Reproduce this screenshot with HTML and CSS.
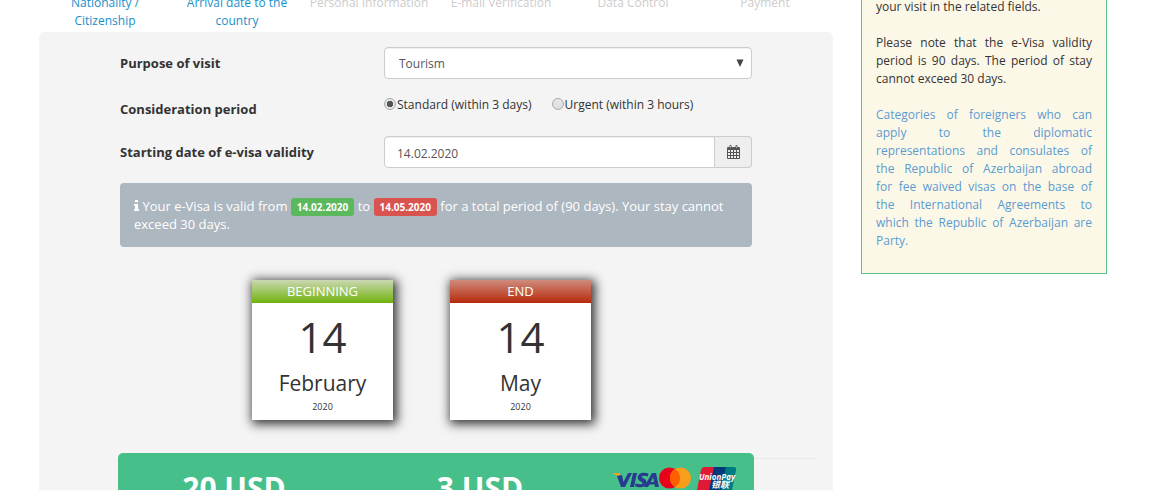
FILE: index.html
```html
<!DOCTYPE html>
<html lang="en">
<head>
<meta charset="utf-8">
<title>e-Visa application</title>
<link rel="stylesheet" href="styles.css">
</head>
<body>
<div class="page">
  <main>
    <ol class="steps">
      <li class="step done">Nationality / Citizenship</li>
      <li class="step done">Arrival date to the country</li>
      <li class="step">Personal Information</li>
      <li class="step">E-mail Verification</li>
      <li class="step">Data Control</li>
      <li class="step">Payment</li>
    </ol>
    <form class="panel">
      <div class="field">
        <label class="name" for="purpose">Purpose of visit</label>
        <div class="select-wrap">
          <select class="control" id="purpose"><option>Tourism</option></select>
          <svg class="arrow" viewBox="0 0 8 8" aria-hidden="true"><path d="M0.500 0.500h7L4 8z"/></svg>
        </div>
      </div>
      <div class="field period">
        <span class="name" id="period">Consideration period</span>
        <div class="radios" role="radiogroup" aria-labelledby="period">
          <label class="choice"><input class="radio" type="radio" name="period" checked>Standard (within 3 days)</label>
          <label class="choice"><input class="radio" type="radio" name="period">Urgent (within 3 hours)</label>
        </div>
      </div>
      <div class="field">
        <label class="name" for="start">Starting date of e-visa validity</label>
        <div class="group">
          <input class="control date" id="start" type="text" value="14.02.2020">
          <button class="pick" type="button" aria-label="Choose date">
            <svg class="calendar" viewBox="0 0 13 14" aria-hidden="true">
              <path fill="#555" d="M1 2h1.500V.8Q2.500 0 3.500 0t1 .8V2h4V.8q0-.8 1-.8t1 .8V2H12q1 0 1 1v10q0 1-1 1H1q-1 0-1-1V3q0-1 1-1z"/>
              <path fill="#eee" d="M1 5h2v2H1zM4 5h2v2H4zM7 5h2v2H7zM10 5h2v2h-2zM1 8h2v2H1zM4 8h2v2H4zM7 8h2v2H7zM10 8h2v2h-2zM1 11h2v2H1zM4 11h2v2H4zM7 11h2v2H7zM10 11h2v2h-2z"/>
              <path stroke="#ccc" stroke-width=".7" d="M3.500 1v2M9.500 1v2"/>
            </svg>
          </button>
        </div>
      </div>
      <p class="notice"><svg class="info" viewBox="0 0 5 11" aria-hidden="true"><path d="M1 0h3v2.300H1zM0 4h4v5h1v2H0V9h1V6H0z"/></svg> Your e-Visa is valid from <span class="tag from">14.02.2020</span> to <span class="tag until">14.05.2020</span> for a total period of (90 days). Your stay cannot exceed 30 days.</p>
      <div class="dates">
        <section class="day">
          <h2 class="day-title begin">BEGINNING</h2>
          <div class="number">14</div>
          <div class="month">February</div>
          <div class="year">2020</div>
        </section>
        <section class="day">
          <h2 class="day-title end">END</h2>
          <div class="number">14</div>
          <div class="month">May</div>
          <div class="year">2020</div>
        </section>
      </div>
      <div class="checkout">
        <hr class="rule">
        <div class="fees">
          <div class="fee">20 USD</div>
          <div class="fee">3 USD</div>
          <svg class="cards" viewBox="0 0 126 28" role="img" aria-label="Visa, Mastercard, UnionPay">
            <path fill="#f7a01b" d="M0 6h6q2 0 2.500 2L10 14Q6 8 0 6z"/>
            <g fill="#273b8f">
              <path d="M5 9l4 11h4l7-14h-4l-4.500 9L10 8z"/>
              <path d="M21 6h4l-3 14h-4z"/>
              <path d="M36.500 6.500l-.8 3q-5-1.700-6 0c-.5 1.500 5.500 2 4.800 6.500-.8 4.500-7.500 5-11.500 3.300l.8-3.100c3 1.500 6.500 1.300 6.800 0 .3-1.600-5.300-2-4.900-6.200.5-4.300 6.300-5.200 10.800-3.500z"/>
              <path fill-rule="evenodd" d="M40 6h4l3 14h-4l-.5-2.500h-5L36 20h-4zm1.200 4.200L38.700 15H42z"/>
            </g>
            <circle cx="57.500" cy="11" r="10.500" fill="#eb001b"/>
            <circle cx="68.500" cy="11" r="10.500" fill="#f79e1b"/>
            <path fill="#ff5f00" d="M63 2a10.500 10.500 0 0 1 0 18 10.500 10.500 0 0 1 0-18z"/>
            <path stroke="#27584a" stroke-width="2" stroke-dasharray="2 1" d="M49 24h28"/>
            <path fill="#e01935" d="M92 0h12l-6 28H84l5-25q1-3 3-3z"/>
            <path fill="#003a78" d="M102 0h14l-6 28H96z"/>
            <path fill="#007b84" d="M114 0h8q3 0 2 3l-5 25h-11z"/>
            <text class="union" x="87" y="13">UnionPay</text>
            <text class="union cjk" x="99" y="21">银联</text>
          </svg>
        </div>
      </div>
    </form>
  </main>
  <aside class="help">
    <p class="para">your visit in the related fields.</p>
    <p class="para">Please note that the e-Visa validity period is 90 days. The period of stay cannot exceed 30 days.</p>
    <p class="para"><a class="link" href="#categories">Categories of foreigners who can apply to the diplomatic representations and consulates of the&nbsp;Republic of Azerbaijan abroad for&nbsp;fee waived visas on the base of the&nbsp;International Agreements to which&nbsp;the Republic of Azerbaijan are Party.</a></p>
  </aside>
</div>
</body>
</html>
```
FILE: styles.css
```css
* { box-sizing: border-box; }
body {
  margin: 0;
  height: 100vh;
  overflow: hidden;
  background: #fff;
  color: #333;
  font: 12px/18px "Open Sans", "Noto Sans", sans-serif;
}
.page {
  display: grid;
  grid-template-columns: 794fr 246fr;
  column-gap: 28px;
  align-items: start;
  padding: 0 43px 0 39px;
}
.steps {
  display: grid;
  grid-template-columns: repeat(6, 1fr);
  list-style: none;
  margin: -6px 0 0;
  padding: 0 2px 2px 0;
}
.step { color: #ccc; text-align: center; }
.done { padding: 0 10px; color: #1a8fc8; }
.panel { background: #f4f4f4; border-radius: 5px; padding: 15px 17px 30px 81px; }
.field {
  display: grid;
  grid-template-columns: 264fr 368fr;
  align-items: center;
  margin: 0 64px 15px 0;
}
.period { height: 27px; align-items: start; }
.period .name { padding-top: 6px; }
.name { font-size: 13px; font-weight: 700; }
.select-wrap { display: grid; align-items: center; }
.select-wrap > * { grid-area: 1 / 1; }
.control {
  width: 100%;
  height: 32px;
  border: 1px solid #ccc;
  border-radius: 4px;
  padding: 2px 14px 0;
  background: #fff;
  color: #555;
  font: inherit;
  appearance: none;
  box-shadow: inset 0 1px 1px #0001;
}
.arrow { justify-self: end; width: 8px; height: 8px; margin-right: 8px; fill: #444; pointer-events: none; }
.radios { display: flex; gap: 20px; padding-top: 2px; }
.choice { display: flex; align-items: center; gap: 1px; height: 18px; white-space: nowrap; }
.radio {
  appearance: none;
  width: 12px;
  height: 12px;
  margin: 0 0 3px;
  border: 1px solid #aaa;
  border-radius: 50%;
  background: linear-gradient(#e8e8e8, #ddd);
}
.radio:checked { background: radial-gradient(circle, #555 0 3px, #e6e6e6 3px); }
.group { display: flex; }
.date { flex: 1; padding: 2px 12px 0; border-radius: 4px 0 0 4px; }
.pick {
  display: grid;
  place-items: center;
  width: 37px;
  border: 1px solid #ccc;
  border-left: 0;
  border-radius: 0 4px 4px 0;
  background: #eee;
  padding: 0;
}
.calendar { width: 13px; height: 14px; }
.notice {
  margin: 0 64px 33px 0;
  padding: 14px;
  border-radius: 4px;
  background: #adb7bf;
  color: #fff;
  font-size: 13px;
}
.info { width: 5px; height: 11px; fill: #fff; }
.tag {
  border-radius: 3px;
  padding: 2px 6px;
  font-size: 10px;
  font-weight: 700;
  line-height: 1;
}
.from { background: #5cb85c; }
.until { background: #d9534f; }
.dates { display: flex; gap: 57px; padding-left: 132px; }
.day {
  width: 141px;
  background: #fff;
  text-align: center;
  box-shadow: 2px 2px 10px 2px #333;
}
.day-title { margin: 0; height: 23px; color: #fff; font-size: 13px; font-weight: 400; line-height: 22px; }
.begin { background: linear-gradient(#cbd8b3, #6fb30c); }
.end { background: linear-gradient(#cf8c7d, #b6290b); }
.number { padding-top: 7px; font-size: 42px; line-height: 54px; }
.month { font-size: 21px; line-height: 38px; }
.year { padding-bottom: 8px; font-size: 9px; line-height: 10px; }
.checkout { display: grid; padding-top: 33px; }
.checkout > * { grid-area: 1 / 1; }
.rule { width: 100%; margin: 5px 0 0; border: 0; border-top: 1px solid #eaeaea; align-self: start; }
.fees {
  display: grid;
  grid-template-columns: 232fr 260fr 144fr;
  align-items: start;
  margin: 0 62px 0 -2px;
  padding: 14px 0;
  border-radius: 5px;
  background: #47bf8a;
  z-index: 1;
}
.fee { padding-top: 5px; color: #fff; font-size: 30px; font-weight: 700; line-height: 32px; text-align: center; }
.cards { width: 126px; height: 28px; margin-left: 2px; }
.union { fill: #fff; font: italic 700 8px "Open Sans", sans-serif; }
.cjk { font: italic 700 9px "Noto Sans CJK SC", sans-serif; }
.help {
  margin-top: -18px;
  padding: 15px 14px 5px;
  border: 1px solid #5fc28e;
  background: #fcf8e8;
}
.para { margin: 0 0 18px; text-align: justify; }
.link { color: #5b9bd0; text-decoration: none; }
```
